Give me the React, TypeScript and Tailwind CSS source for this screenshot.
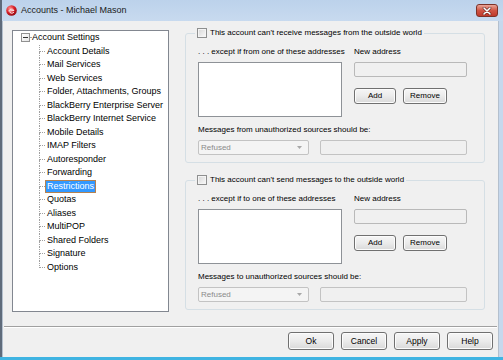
import React from "react";

const treeItems = [
  "Account Details",
  "Mail Services",
  "Web Services",
  "Folder, Attachments, Groups",
  "BlackBerry Enterprise Server",
  "BlackBerry Internet Service",
  "Mobile Details",
  "IMAP Filters",
  "Autoresponder",
  "Forwarding",
  "Restrictions",
  "Quotas",
  "Aliases",
  "MultiPOP",
  "Shared Folders",
  "Signature",
  "Options",
];

function WinButton({ label, className }: { label: string; className: string }) {
  return (
    <button
      className={`${className} flex items-center justify-center rounded-[3px] border border-[#707070] bg-gradient-to-b from-[#f6f6f6] via-[#ebebeb] to-[#d9d9d9] leading-none text-black shadow-[inset_0_0_0_1px_#fcfcfc]`}
    >
      {label}
    </button>
  );
}

function CheckBox() {
  return (
    <div className="w-[10px] h-[10px] border border-[#8e8f8f] bg-gradient-to-br from-[#d6d6d6] to-[#fafafa] shadow-[inset_0_0_0_1px_#f4f4f4]" />
  );
}

function Group({
  title,
  exceptLabel,
  msgLabel,
  className,
}: {
  title: string;
  exceptLabel: string;
  msgLabel: string;
  className?: string;
}) {
  return (
    <fieldset className={`w-[300px] border border-[#d5dfe5] rounded-[3px] ${className ?? ""}`}>
      <legend className="ml-[9px] px-[2px] h-[12px] flex items-center gap-[3px]">
        <CheckBox />
        <span className="text-[8px] leading-[10px] text-black whitespace-nowrap">{title}</span>
      </legend>
      <div className="pl-[12px] pr-[17px] pb-[7px]">
        <div className="flex gap-[12px] mt-[8px]">
          <div className="w-[144px] flex flex-col">
            <span className="h-[10px] text-[8px] leading-[10px] whitespace-nowrap">{exceptLabel}</span>
            <div className="mt-[5px] h-[55px] bg-white border border-[#8e9297]" />
          </div>
          <div className="flex-1 flex flex-col">
            <span className="h-[10px] text-[8px] leading-[10px] whitespace-nowrap">New address</span>
            <div className="mt-[5px] h-[15px] bg-[#f0f0f0] border border-[#b9b9b9] rounded-[2px]" />
            <div className="mt-[11px] flex gap-[7px]">
              <WinButton label="Add" className="w-[42px] h-[16px] text-[8px]" />
              <WinButton label="Remove" className="w-[44px] h-[16px] text-[8px]" />
            </div>
          </div>
        </div>
        <div className="mt-[8px] h-[10px] text-[8px] leading-[10px] whitespace-nowrap">{msgLabel}</div>
        <div className="mt-[5px] flex gap-[11px]">
          <div className="w-[111px] h-[15px] flex items-center justify-between pl-[2px] pr-[6px] bg-[#f4f4f4] border border-[#c3c3c3] rounded-[2px]">
            <span className="text-[8px] leading-none text-[#8a8a8a]">Refused</span>
            <svg width="5" height="3" viewBox="0 0 5 3">
              <path d="M0 0 L5 0 L2.5 3 Z" fill="#a8a8a8" />
            </svg>
          </div>
          <div className="flex-1 h-[15px] bg-[#f0f0f0] border border-[#c3c3c3] rounded-[2px]" />
        </div>
      </div>
    </fieldset>
  );
}

function Tree() {
  return (
    <div className="mt-[3px] w-[157px] h-[282px] bg-white border border-[#828790] text-[9px] text-black">
      <div className="flex items-center h-[13.5px] pl-[8px]">
        <div className="w-[9px] h-[9px] border border-[#919191] bg-gradient-to-br from-white to-[#e6e6e6] flex items-center justify-center">
          <div className="w-[5px] h-[1px] bg-[#333]" />
        </div>
        <div className="w-[2px] h-[1px] bg-[#a0a0a0]" />
        <span className="leading-none">Account Settings</span>
      </div>
      <div className="ml-[26px]">
        {treeItems.map((item, i) => {
          const last = i === treeItems.length - 1;
          const selected = item === "Restrictions";
          return (
            <div key={item} className="flex items-center h-[13.5px]">
              <div className="w-[6px] h-full flex flex-col">
                <div className="flex-1 border-l border-b border-dotted border-[#a0a0a0]" />
                <div className={`flex-1 ${last ? "" : "border-l border-dotted border-[#a0a0a0]"}`} />
              </div>
              <span
                className={`h-[13px] flex items-center px-[1px] border leading-none whitespace-nowrap ${
                  selected ? "bg-[#3399ff] text-white border-[#b5824f]" : "border-transparent"
                }`}
              >
                {item}
              </span>
            </div>
          );
        })}
      </div>
    </div>
  );
}

export default function App() {
  return (
    <div className="w-[503px] h-[360px] flex flex-col bg-[#c6d8ed] font-['Liberation_Sans',Arial,sans-serif] overflow-hidden">
      <div className="h-[21px] flex items-center pl-[4px] pr-[5px] bg-gradient-to-b from-[#bcd2eb] to-[#c8daef] border-l-2 border-[#5f6b7b]">
        <svg width="11" height="11" viewBox="0 0 11 11">
          <defs>
            <radialGradient id="lg" cx="0.35" cy="0.3" r="0.75">
              <stop offset="0" stopColor="#ff8a8a" />
              <stop offset="0.55" stopColor="#d81f26" />
              <stop offset="1" stopColor="#8e0b12" />
            </radialGradient>
          </defs>
          <circle cx="5.5" cy="5.5" r="5.3" fill="url(#lg)" />
          <path d="M3 6.3 C3 3.6 7.6 3.4 7.8 5.6 L3.6 6 M3.4 6.6 C4 8.4 6.6 8.6 7.8 7.3" stroke="#fff" strokeWidth="1" fill="none" />
        </svg>
        <span className="ml-[4px] text-[9px] leading-none text-[#1b1b1b]">Accounts - Michael Mason</span>
        <div className="ml-auto w-[22px] h-[13px] rounded-[3px] border border-[#7d3228] bg-gradient-to-b from-[#e9a598] via-[#cf5444] to-[#c0392b] flex items-center justify-center">
          <svg width="10" height="8" viewBox="0 0 10 8">
            <path d="M2 1 L8 7 M8 1 L2 7" stroke="#5a1a14" strokeWidth="2.6" strokeLinecap="round" />
            <path d="M2 1 L8 7 M8 1 L2 7" stroke="#ffffff" strokeWidth="1.6" strokeLinecap="round" />
          </svg>
        </div>
      </div>
      <div className="flex-1 flex">
        <div className="w-[2px] bg-[#5f6b7b]" />
        <div className="flex-1 flex flex-col bg-[#f0f0f0] border-l border-r border-[#b4c0ce] text-black">
          <div className="flex items-start gap-[16px] pl-[9px] pt-[6px]">
            <Tree />
            <div className="flex flex-col">
              <Group
                title="This account can't receive messages from the outside world"
                exceptLabel=". . . except if from one of these addresses"
                msgLabel="Messages from unauthorized sources should be:"
              />
              <Group
                className="mt-[11px]"
                title="This account can't send messages to the outside world"
                exceptLabel=". . . except if to one of these addresses"
                msgLabel="Messages to unauthorized sources should be:"
              />
            </div>
          </div>
          <div className="mt-[14px] mx-[1px] h-[2px] border-t border-[#a0a0a0] border-b border-b-white" />
          <div className="mt-[4px] flex justify-end gap-[7px] pr-[5px]">
            <WinButton label="Ok" className="w-[46px] h-[18px] text-[8.5px]" />
            <WinButton label="Cancel" className="w-[46px] h-[18px] text-[8.5px]" />
            <WinButton label="Apply" className="w-[46px] h-[18px] text-[8.5px]" />
            <WinButton label="Help" className="w-[46px] h-[18px] text-[8.5px]" />
          </div>
        </div>
        <div className="w-[4px]" />
      </div>
      <div className="h-[3px] bg-[#3fb4e2]" />
    </div>
  );
}
